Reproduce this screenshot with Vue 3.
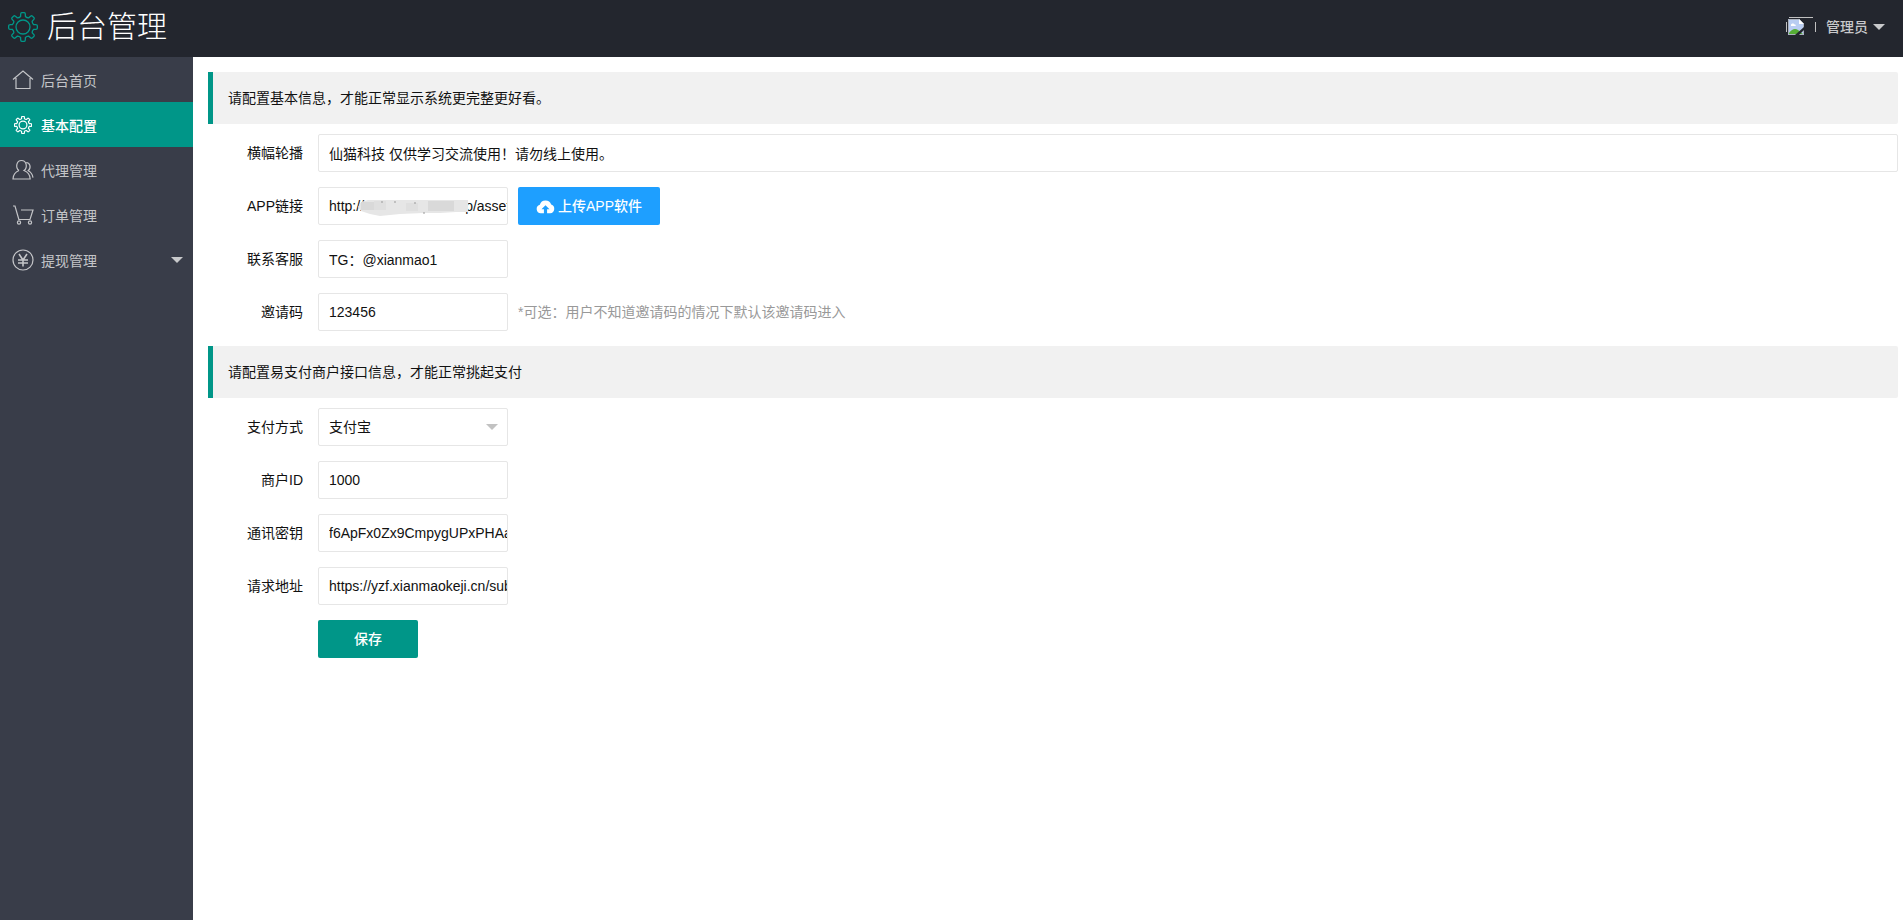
<script setup>
import { ref } from 'vue'

// Outline of an eight-toothed gear centred in a 30x30 box.
function gearPath() {
  const at = (deg, r) => {
    const a = (deg - 90) * Math.PI / 180
    return `${(15 + r * Math.cos(a)).toFixed(2)} ${(15 + r * Math.sin(a)).toFixed(2)}`
  }
  let d = `M${at(-13, 10.8)}`
  for (let k = 0; k < 8; k++) {
    const c = k * 45
    d += `L${at(c - 10, 13.2)}Q${at(c - 9, 14.4)} ${at(c - 5, 14.4)}L${at(c + 5, 14.4)}Q${at(c + 9, 14.4)} ${at(c + 10, 13.2)}L${at(c + 13, 10.8)}`
    d += `Q${at(c + 22.5, 9.8)} ${at(c + 32, 10.8)}`
  }
  return d + 'z'
}
const gear = gearPath()

const nav = [
  { name: '后台首页', icon: 'home' },
  { name: '基本配置', icon: 'gear', active: true },
  { name: '代理管理', icon: 'user' },
  { name: '订单管理', icon: 'cart' },
  { name: '提现管理', icon: 'yen', more: true }
]

const banner = ref('仙猫科技 仅供学习交流使用！请勿线上使用。')
const appUrl = ref('http://xxxxxxxxxxxxxvip/assets/app.apk')
const service = ref('TG：@xianmao1')
const invite = ref('123456')
const pay = ref('alipay')
const merchant = ref('1000')
const secret = ref('f6ApFx0Zx9CmpygUPxPHAa')
const gateway = ref('https://yzf.xianmaokeji.cn/submit.php')
</script>

<template>
  <div class="page">
    <header class="top">
      <a class="brand" href="#">
        <svg class="brand-icon" viewBox="0 0 30 30"><path :d="gear" /><circle cx="15" cy="15" r="7" /></svg>
        <span>后台管理</span>
      </a>
      <a class="account" href="#">
        <svg class="avatar" viewBox="0 0 30 20">
          <path d="M3 .5h24M.5 5v10M29.500 5v10" stroke="#c0c0c0" />
          <path d="M2 2h11l5 5v11H2z" fill="#b9cdf2" />
          <path d="M2.500 17.500v-15h10.300l4.700 4.700v10.300z" fill="none" stroke="#aab1bd" />
          <path d="M13 2v5h5z" fill="#fff" />
          <path d="M5 8c0-2 3-2 3.500-.5C10 7 10.500 9 9 9H5z" fill="#fff" />
          <path d="M3 17v-1c3-4 6-5 9-3l5 4z" fill="#55ac35" />
          <path d="M9 18l9-8v3l-5 5z" fill="#23262e" />
        </svg>
        <span>管理员</span>
        <i class="caret"></i>
      </a>
    </header>

    <div class="body">
      <nav class="side">
        <a v-for="n in nav" :key="n.name" href="#" class="nav-item" :class="{ active: n.active }">
          <svg v-if="n.icon === 'home'" class="nav-icon" viewBox="0 0 22 22"><path d="M1 10.500 11 2l10 8.500M4 9v10.500h14V9" /></svg>
          <svg v-else-if="n.icon === 'gear'" class="nav-icon small" viewBox="0 0 30 30"><path :d="gear" /><circle cx="15" cy="15" r="6.500" /></svg>
          <svg v-else-if="n.icon === 'user'" class="nav-icon" viewBox="0 0 22 22"><path d="M7 11.500C3 8.500 4.500 1.500 9.500 1.500s6.500 7 2.500 10c4 1.500 6 4.500 6.200 8.500H1c.2-4 2-7 6-8.500M14.200 3.500c4 .2 5.300 5.500 2 8.200 2.800 1.300 4.300 3.500 4.800 7" /></svg>
          <svg v-else-if="n.icon === 'cart'" class="nav-icon" viewBox="0 0 22 22"><path d="M1 2h2l4 14M9 6h12l-3 9.500H6.500" /><circle cx="7" cy="18.500" r="1.600" /><circle cx="18" cy="18.500" r="1.600" /></svg>
          <svg v-else class="nav-icon" viewBox="0 0 22 22"><circle cx="11" cy="11" r="10" /><path class="bold" d="m7 5 4 6 4-6M11 11v6.500M6 11h10M6 14h10" /></svg>
          <span>{{ n.name }}</span>
          <i v-if="n.more" class="caret"></i>
        </a>
      </nav>

      <main class="main">
        <blockquote class="quote">请配置基本信息，才能正常显示系统更完整更好看。</blockquote>
        <div class="row">
          <label for="banner">横幅轮播</label>
          <input id="banner" v-model="banner" class="field wide" type="text">
        </div>
        <div class="row">
          <label for="app">APP链接</label>
          <div class="masked">
            <input id="app" v-model="appUrl" class="field" type="text">
            <svg class="smudge" viewBox="0 0 110 16">
              <path d="M0 7 3 2 10 0h100v12H98l-16 1H66l-24 1-20 2-10-2-9-3z" fill="#e6e6e6" />
              <path d="M3 2h13v8H3zM70 1h26v10H70z" fill="#d9d9d9" />
              <path d="M16 1h12v9H16zM48 3h12v8H48z" fill="#dfdfdf" />
              <path d="M24 1v2M37 1v2M57 2v2M66 12v2" stroke="#999" />
            </svg>
          </div>
          <button class="btn upload" type="button">
            <svg class="cloud" viewBox="0 0 18 14"><path d="M4.500 13.500a4.200 4.200 0 0 1-.9-8.200A5.700 5.700 0 0 1 14.400 5a4.400 4.400 0 0 1-.9 8.500h-3V9.500h2.300L9 5.700 5.200 9.500h2.300v4z" /></svg>
            <span>上传APP软件</span>
          </button>
        </div>
        <div class="row">
          <label for="service">联系客服</label>
          <input id="service" v-model="service" class="field" type="text">
        </div>
        <div class="row">
          <label for="invite">邀请码</label>
          <input id="invite" v-model="invite" class="field" type="text">
          <span class="hint">*可选：用户不知道邀请码的情况下默认该邀请码进入</span>
        </div>

        <blockquote class="quote">请配置易支付商户接口信息，才能正常挑起支付</blockquote>
        <div class="row">
          <label for="pay">支付方式</label>
          <div class="picker">
            <select id="pay" v-model="pay" class="field"><option value="alipay">支付宝</option></select>
            <i class="caret"></i>
          </div>
        </div>
        <div class="row">
          <label for="merchant">商户ID</label>
          <input id="merchant" v-model="merchant" class="field" type="text">
        </div>
        <div class="row">
          <label for="secret">通讯密钥</label>
          <input id="secret" v-model="secret" class="field" type="text">
        </div>
        <div class="row">
          <label for="gateway">请求地址</label>
          <input id="gateway" v-model="gateway" class="field" type="text">
        </div>
        <div class="row actions">
          <button class="btn save" type="button">保存</button>
        </div>
      </main>
    </div>
  </div>
</template>

<style>
body {
  margin: 0;
}
</style>

<style scoped>
* {
  box-sizing: border-box;
}
.page {
  display: flex;
  flex-direction: column;
  min-height: 100vh;
  background: #fff;
  color: #111;
  font: 14px/20px "Liberation Sans", "Noto Sans CJK SC", sans-serif;
}
a {
  color: inherit;
  text-decoration: none;
}
svg {
  display: block;
  flex: none;
}
.top {
  display: flex;
  align-items: center;
  justify-content: space-between;
  height: 57px;
  padding: 0 18px 4px 8px;
  background: #23262e;
}
.brand {
  display: flex;
  align-items: center;
  gap: 9px;
  color: #fff;
  font-size: 30px;
  font-weight: 300;
  line-height: 40px;
}
.brand-icon {
  width: 30px;
  height: 30px;
  fill: none;
  stroke: #009688;
  stroke-width: 1.3;
}
.account {
  display: flex;
  align-items: center;
  color: #c8c9cb;
  font-weight: 500;
}
.avatar {
  width: 30px;
  height: 20px;
  margin-right: 10px;
}
.caret {
  flex: none;
  width: 0;
  height: 0;
  border: 6px solid transparent;
  border-top-color: #c8c9cb;
  border-bottom-width: 0;
}
.account .caret {
  margin-left: 5px;
}
.body {
  display: flex;
  flex: 1;
}
.side {
  flex: none;
  width: 193px;
  background: #393d49;
}
.nav-item {
  display: flex;
  align-items: center;
  height: 45px;
  padding: 0 10px 0 12px;
  color: #c4c5c8;
}
.nav-item span {
  flex: 1;
  padding-top: 3px;
}
.nav-item.active {
  background: #009688;
  color: #fff;
  font-weight: 500;
}
.nav-icon {
  width: 22px;
  height: 22px;
  margin-right: 7px;
  fill: none;
  stroke: currentColor;
  stroke-width: 1.2;
}
.nav-icon.small {
  width: 18px;
  height: 18px;
  margin: 0 9px 0 2px;
  stroke-width: 2;
}
.nav-icon .bold {
  stroke-width: 1.6;
}
.main {
  flex: 1;
  min-width: 0;
  padding: 15px 5px 15px 15px;
}
.quote {
  margin: 0 0 10px;
  padding: 15px;
  border-left: 5px solid #009688;
  border-radius: 0 2px 2px 0;
  background: #f1f1f1;
  line-height: 22px;
}
.row {
  display: flex;
  align-items: center;
  height: 38px;
  margin-bottom: 15px;
}
.row label {
  flex: none;
  width: 110px;
  padding-right: 15px;
  text-align: right;
}
.field {
  display: block;
  flex: none;
  width: 190px;
  height: 38px;
  margin: 0;
  padding: 0 0 0 10px;
  border: 1px solid #e6e6e6;
  border-radius: 2px;
  outline: none;
  background: #fff;
  color: #111;
  font: inherit;
  appearance: none;
}
.field.wide {
  flex: 1;
}
.masked,
.picker {
  position: relative;
}
.smudge {
  position: absolute;
  top: 13px;
  left: 40px;
  width: 110px;
  height: 16px;
}
.picker .caret {
  position: absolute;
  top: 16px;
  right: 10px;
  border-top-color: #c2c2c2;
  pointer-events: none;
}
.btn {
  display: flex;
  align-items: center;
  justify-content: center;
  height: 38px;
  padding: 0 18px;
  border: 0;
  border-radius: 2px;
  color: #fff;
  font: inherit;
  font-weight: 500;
  cursor: pointer;
}
.upload {
  gap: 3px;
  margin-left: 10px;
  background: #1e9fff;
}
.cloud {
  width: 19px;
  height: 15px;
  fill: #fff;
}
.hint {
  margin-left: 10px;
  color: #999;
}
.actions {
  padding-left: 110px;
}
.save {
  width: 100px;
  background: #009688;
}
</style>
